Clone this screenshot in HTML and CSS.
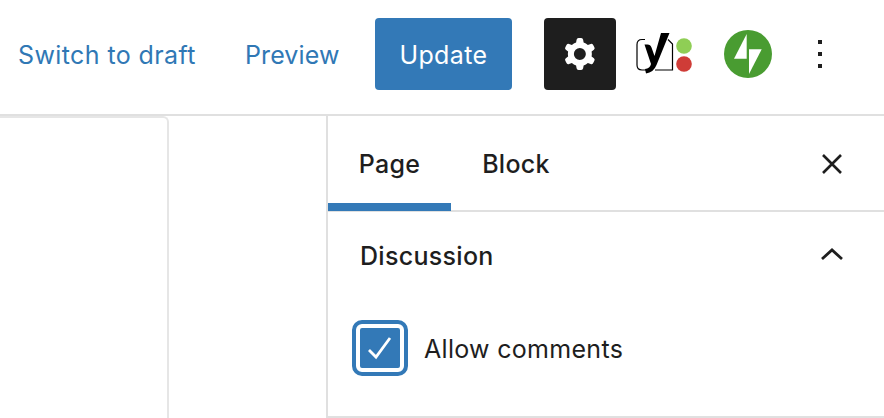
FILE: index.html
```html
<!DOCTYPE html>
<html lang="en">
<head>
    <meta charset="UTF-8">
    <meta name="viewport" content="width=device-width, initial-scale=1.0">
    <title>Edit Page</title>
    <link rel="stylesheet" href="styles.css">
</head>
<body>
    <header class="topbar">
        <a class="link-btn switch-draft">Switch to draft</a>
        <a class="link-btn preview">Preview</a>
        <button class="update-btn">Update</button>
        <button class="icon-btn settings-btn" aria-label="Settings">
            <svg width="48" height="48" viewBox="0 0 24 24" fill="#fff">
                <path fill-rule="evenodd" d="M10.289 4.836A1 1 0 0 1 11.275 4h1.306a1 1 0 0 1 .987.836l.244 1.466c.787.26 1.503.679 2.108 1.218l1.393-.522a1 1 0 0 1 1.216.437l.653 1.13a1 1 0 0 1-.23 1.273l-1.148.944a6.025 6.025 0 0 1 0 2.435l1.149.946a1 1 0 0 1 .23 1.272l-.653 1.13a1 1 0 0 1-1.216.437l-1.394-.522c-.605.54-1.32.958-2.108 1.218l-.244 1.466a1 1 0 0 1-.987.836h-1.306a1 1 0 0 1-.986-.836l-.244-1.466a5.995 5.995 0 0 1-2.108-1.218l-1.394.522a1 1 0 0 1-1.217-.436l-.653-1.131a1 1 0 0 1 .23-1.272l1.149-.946a6.026 6.026 0 0 1 0-2.435l-1.148-.944a1 1 0 0 1-.23-1.272l.653-1.131a1 1 0 0 1 1.217-.437l1.393.522a5.994 5.994 0 0 1 2.108-1.218l.244-1.466zM14.929 12a3 3 0 1 1-6 0 3 3 0 0 1 6 0z"/>
            </svg>
        </button>
        <span class="yoast-icon">
            <svg width="60" height="44" viewBox="0 0 60 44">
                <path d="M9 7.500H6Q1 7.500 1 12.500V33Q1 38 6 38H10M32 7.500L36.500 12V38H19" fill="none" stroke="#000" stroke-width="1.200"/>
                <path d="M25 1H33.500L20.500 33Q17.500 40.500 10 41.500L9 37Q14 36.500 15 32L8.500 12.500H11.500Q14.500 12.500 15.500 15.500L18.500 24z" fill="#000"/>
                <circle cx="48" cy="14" r="7.800" fill="#8fce55"/>
                <circle cx="48" cy="32" r="7.800" fill="#cf3c37"/>
            </svg>
        </span>
        <span class="jetpack-icon">
            <svg width="48" height="48" viewBox="0 0 48 48">
                <circle cx="24" cy="24" r="24" fill="#499c31"/>
                <path d="M22.700 4V28.700H10z" fill="#fff"/>
                <path d="M25 44V19.300H37.700z" fill="#fff"/>
            </svg>
        </span>
        <span class="more-icon"><i></i><i></i><i></i></span>
    </header>
    <div class="editor">
        <main class="canvas">
            <div class="page-card"></div>
        </main>
        <aside class="sidebar">
            <div class="tabs">
                <div class="tab tab-active">Page</div>
                <div class="tab">Block</div>
                <svg class="close-icon" width="22" height="22" viewBox="0 0 22 22">
                    <path d="M2 2L20 20M20 2L2 20" stroke="#1e1e1e" stroke-width="2.600" fill="none"/>
                </svg>
            </div>
            <section class="panel">
                <div class="panel-head">
                    <h2>Discussion</h2>
                    <svg width="24" height="14" viewBox="0 0 24 14">
                        <path d="M2 12L12 3L22 12" stroke="#1e1e1e" stroke-width="2.800" fill="none"/>
                    </svg>
                </div>
                <label class="check-row">
                    <span class="checkbox">
                        <svg width="30" height="26" viewBox="0 0 30 26">
                            <path d="M4 15L11 22L25 3" stroke="#fff" stroke-width="2.800" fill="none"/>
                        </svg>
                    </span>
                    <span class="check-label">Allow comments</span>
                </label>
            </section>
        </aside>
    </div>
</body>
</html>
```

FILE: styles.css
```css
* {
    box-sizing: border-box;
}
html, body {
    height: 100%;
}
body {
    margin: 0;
    width: 884px;
    height: 418px;
    overflow: hidden;
    background-color: #fff;
    color: #1e1e1e;
    font-family: Inter, "Liberation Sans", sans-serif;
    font-size: 25px;
    letter-spacing: 0.3px;
}
.topbar {
    display: flex;
    align-items: center;
    height: 116px;
    border-bottom: 2px solid #e0e0e0;
    padding: 0 0 6px 18px;
}
.link-btn {
    color: #3078b5;
    white-space: nowrap;
    letter-spacing: 0.4px;
    margin-top: 2px;
}
.switch-draft {
    width: 227px;
}
.preview {
    width: 130px;
    letter-spacing: 0.1px;
}
.update-btn {
    width: 137px;
    height: 72px;
    padding: 2px 0 0;
    background-color: #3379b7;
    color: #fff;
    border: none;
    border-radius: 4px;
    font-family: inherit;
    font-size: 25px;
    letter-spacing: 0.4px;
}
.icon-btn {
    display: flex;
    align-items: center;
    justify-content: center;
    width: 72px;
    height: 72px;
    border: none;
    padding: 0;
    border-radius: 4px;
}
.settings-btn {
    margin-left: 32px;
    background-color: #1e1e1e;
}
.yoast-icon {
    display: flex;
    margin-left: 20px;
}
.jetpack-icon {
    display: flex;
    margin-left: 28px;
}
.more-icon {
    display: flex;
    flex-direction: column;
    gap: 8px;
    margin-left: 46px;
}
.more-icon i {
    display: block;
    width: 4px;
    height: 4px;
    background-color: #1e1e1e;
}
.editor {
    display: flex;
    height: 302px;
}
.canvas {
    width: 326px;
}
.page-card {
    width: 169px;
    height: 100%;
    border-top: 2px solid #e6e6e6;
    border-right: 2px solid #e6e6e6;
    border-top-right-radius: 6px;
}
.sidebar {
    flex: 1;
    border-left: 2px solid #e0e0e0;
    border-bottom: 2px solid #e0e0e0;
}
.tabs {
    display: flex;
    align-items: flex-start;
    height: 96px;
    border-bottom: 2px solid #e0e0e0;
}
.tab {
    display: flex;
    align-items: center;
    justify-content: center;
    height: 94px;
    padding-top: 2px;
    font-weight: 500;
    width: 130px;
}
.tab-active {
    width: 123px;
    height: 95px;
    padding-top: 9px;
    border-bottom: 8px solid #3379b7;
}
.close-icon {
    margin: 37px 41px 0 auto;
}
.panel {
    padding: 0 40px 0 32px;
}
.panel-head {
    display: flex;
    align-items: center;
    justify-content: space-between;
    height: 88px;
}
.panel-head h2 {
    margin: 0;
    font-size: inherit;
    font-weight: 500;
}
.panel-head svg {
    margin-top: -4px;
}
.check-row {
    display: flex;
    align-items: center;
    gap: 16px;
    margin: 20px 0 0 -8px;
}
.check-label {
    margin-top: 2px;
}
.checkbox {
    display: flex;
    align-items: center;
    justify-content: center;
    width: 56px;
    height: 56px;
    background-color: #3379b7;
    border: 8px solid #fff;
    border-radius: 10px;
    outline: 4px solid #3379b7;
    outline-offset: -4px;
}
```
